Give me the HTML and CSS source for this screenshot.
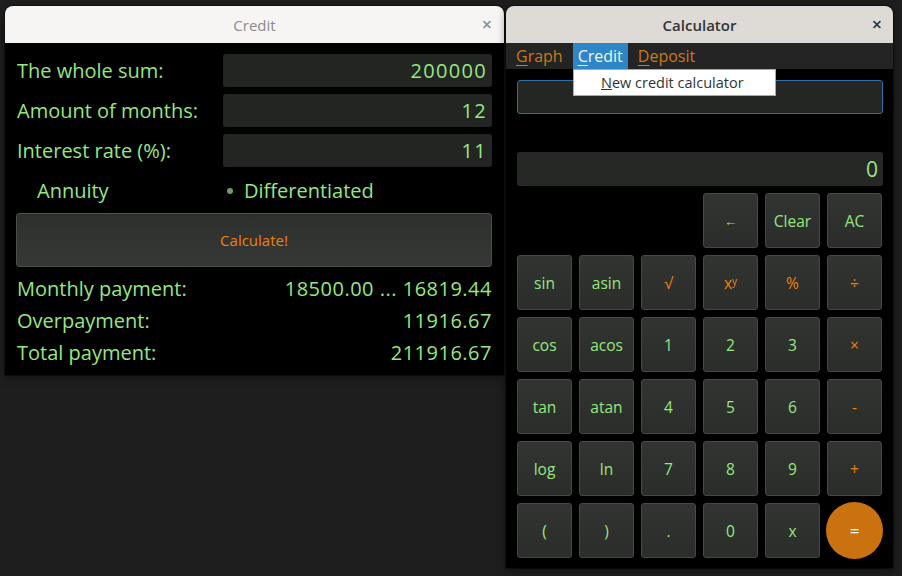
FILE: index.html
```html
<!DOCTYPE html>
<html>
<head>
<meta charset="utf-8">
<link rel="stylesheet" href="styles.css">
</head>
<body>
<div class="desktop">
  <div class="window credit-win">
    <div class="titlebar credit-title">
      <span class="title">Credit</span>
      <span class="close">×</span>
    </div>
    <div class="credit-body">
      <div class="field-row">
        <span class="lbl">The whole sum:</span>
        <div class="entry">200000</div>
      </div>
      <div class="field-row">
        <span class="lbl">Amount of months:</span>
        <div class="entry">12</div>
      </div>
      <div class="field-row">
        <span class="lbl">Interest rate (%):</span>
        <div class="entry">11</div>
      </div>
      <div class="radio-row">
        <span class="radio annuity">Annuity</span>
        <span class="radio diff"><span class="dot"></span>Differentiated</span>
      </div>
      <div class="calc-btn">Calculate!</div>
      <div class="result-row"><span>Monthly payment:</span><span class="num">18500.00 ... 16819.44</span></div>
      <div class="result-row"><span>Overpayment:</span><span class="num">11916.67</span></div>
      <div class="result-row"><span>Total payment:</span><span class="num">211916.67</span></div>
    </div>
  </div>

  <div class="window calc-win">
    <div class="titlebar calc-title">
      <span class="title bold">Calculator</span>
      <span class="close dark">×</span>
    </div>
    <div class="menubar">
      <span class="menu-item"><u>G</u>raph</span>
      <span class="menu-item active"><u>C</u>redit</span>
      <span class="menu-item"><u>D</u>eposit</span>
    </div>
    <div class="calc-body">
      <div class="expr-entry"></div>
      <div class="display">0</div>
      <div class="keys">
        <span class="key blank"></span>
        <span class="key blank"></span>
        <span class="key blank"></span>
        <button class="key small">←</button>
        <button class="key">Clear</button>
        <button class="key">AC</button>

        <button class="key">sin</button>
        <button class="key">asin</button>
        <button class="key op">√</button>
        <button class="key op">x<sup>y</sup></button>
        <button class="key op">%</button>
        <button class="key op">÷</button>

        <button class="key">cos</button>
        <button class="key">acos</button>
        <button class="key">1</button>
        <button class="key">2</button>
        <button class="key">3</button>
        <button class="key op">×</button>

        <button class="key">tan</button>
        <button class="key">atan</button>
        <button class="key">4</button>
        <button class="key">5</button>
        <button class="key">6</button>
        <button class="key op">-</button>

        <button class="key">log</button>
        <button class="key">ln</button>
        <button class="key">7</button>
        <button class="key">8</button>
        <button class="key">9</button>
        <button class="key op">+</button>

        <button class="key">(</button>
        <button class="key">)</button>
        <button class="key">.</button>
        <button class="key">0</button>
        <button class="key">x</button>
        <button class="key equals">=</button>
      </div>
    </div>
    <div class="dropdown">
      <span><u>N</u>ew credit calculator</span>
    </div>
  </div>
</div>
</body>
</html>
```

FILE: styles.css
```css
* { box-sizing: border-box; }

html, body {
  margin: 0;
  padding: 0;
  background: #1f1f1f;
}

body {
  font-family: "Open Sans", "Noto Sans", sans-serif;
}

.desktop {
  position: relative;
  width: 902px;
  height: 576px;
  overflow: hidden;
  background: #1e1e1e;
}

.window {
  position: absolute;
  display: flex;
  flex-direction: column;
  border-radius: 8px 8px 0 0;
  box-shadow: 0 0 0 1px rgba(0,0,0,0.35), 0 2px 8px rgba(0,0,0,0.5);
}

.credit-win {
  left: 5px;
  top: 6px;
  width: 499px;
  height: 369px;
}

.calc-win {
  left: 506px;
  top: 6px;
  width: 387px;
  height: 562px;
}

.titlebar {
  height: 37px;
  flex: none;
  position: relative;
  display: flex;
  align-items: center;
  justify-content: center;
  border-radius: 8px 8px 0 0;
}

.credit-title { background: #f6f5f4; }
.calc-title { background: #dedad6; }

.title {
  font-size: 15px;
  color: #8b8b8b;
  font-weight: 500;
}

.title.bold {
  font-weight: 600;
  color: #2e3436;
}

.close {
  position: absolute;
  right: 12px;
  top: 8px;
  font-size: 18px;
  line-height: 20px;
  color: #8f8f8f;
  font-weight: 600;
}

.close.dark { color: #2e3436; right: 11px; }

/* Credit window */
.credit-body {
  flex: 1;
  background: #000;
  padding: 11px 12px 0 12px;
  display: flex;
  flex-direction: column;
  color: #96e77f;
  font-size: 20px;
  font-weight: 500;
}

.field-row {
  display: flex;
  align-items: center;
  justify-content: space-between;
  height: 33px;
  margin-bottom: 7px;
}

.entry {
  width: 269px;
  height: 33px;
  background: #232523;
  border-radius: 3px;
  text-align: right;
  padding-right: 5px;
  line-height: 33px;
  letter-spacing: 1.3px;
}

.radio-row {
  display: flex;
  align-items: center;
  height: 33px;
  margin-bottom: 6px;
}

.radio.annuity {
  width: 206px;
  padding-left: 20px;
}

.radio.diff {
  display: flex;
  align-items: center;
}

.dot {
  width: 6px;
  height: 6px;
  border-radius: 50%;
  background: #6b9e60;
  margin: 0 11px 0 4px;
}

.calc-btn {
  height: 54px;
  margin-left: -1px;
  border: 1px solid #4c4e4c;
  border-radius: 3px;
  background: linear-gradient(#2e302e, #363836);
  color: #f0800f;
  font-size: 15px;
  font-weight: 500;
  display: flex;
  align-items: center;
  justify-content: center;
  margin-bottom: 5px;
}

.result-row {
  display: flex;
  justify-content: space-between;
  height: 32px;
  align-items: center;
}

.num { letter-spacing: 0.5px; }

/* Calculator window */
.menubar {
  height: 26px;
  flex: none;
  background: #232423;
  display: flex;
  align-items: stretch;
  padding-left: 5px;
}

.menu-item {
  font-size: 16px;
  font-weight: 500;
  color: #c97a1c;
  padding: 0 5px;
  margin-right: 5px;
  display: flex;
  align-items: center;
}

.menu-item u { text-decoration-thickness: 1px; text-underline-offset: 3px; }

.menu-item.active {
  background: #2f86c6;
  color: #f2f6fa;
}

.calc-body {
  flex: 1;
  background: #000;
  padding: 11px 10px 10px 11px;
  display: flex;
  flex-direction: column;
}

.expr-entry {
  height: 34px;
  border: 1px solid #2f6fa3;
  border-radius: 3px;
  background: #242624;
  margin-bottom: 38px;
}

.display {
  height: 34px;
  background: #262826;
  border-radius: 3px;
  color: #96e77f;
  font-size: 21px;
  line-height: 34px;
  text-align: right;
  padding-right: 5px;
  margin-bottom: 7px;
}

.keys {
  display: grid;
  grid-template-columns: repeat(6, 55px);
  grid-auto-rows: 55px;
  gap: 7px;
}

.key {
  font-family: inherit;
  font-size: 15.5px;
  font-weight: 500;
  color: #96e77f;
  background: linear-gradient(#323432, #2b2d2b);
  border: 1px solid #474947;
  border-radius: 3px;
  padding: 0;
  display: flex;
  align-items: center;
  justify-content: center;
}

.key.small { font-size: 13px; }

.key.blank {
  visibility: hidden;
}

.key.op { color: #f0800f; }

.key sup {
  font-size: 10px;
  position: relative;
  top: -2px;
}

.key.equals {
  border: none;
  border-radius: 50%;
  background: #c9720f;
  color: #fff;
  font-size: 17px;
  width: 57px;
  height: 57px;
  margin: -1px 0 0 -1px;
}

.dropdown {
  position: absolute;
  left: 67px;
  top: 63px;
  width: 203px;
  height: 27px;
  background: #fff;
  border: 1px solid #a9a9a9;
  color: #2e3436;
  font-size: 14.5px;
  padding-left: 27px;
  display: flex;
  align-items: center;
}
```
